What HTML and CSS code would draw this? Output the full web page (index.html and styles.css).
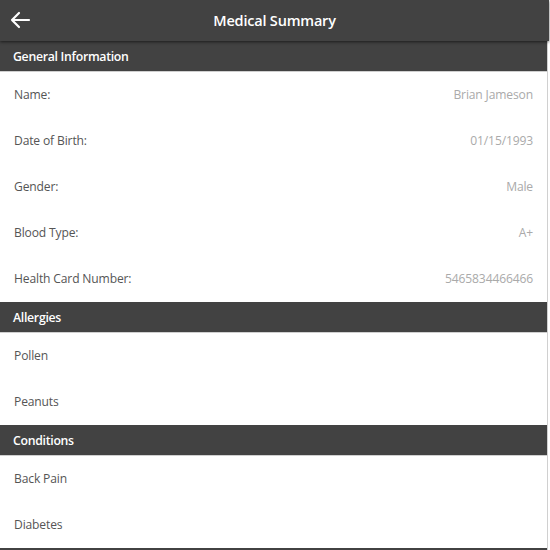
FILE: index.html
```html
<!DOCTYPE html>
<html>
<head>
<meta charset="utf-8">
<link rel="stylesheet" href="styles.css">
</head>
<body>
<div class="topbar">
  <svg class="back" width="22" height="18" viewBox="0 0 22 18"><path d="M20 9H3M10 2L3 9l7 7" fill="none" stroke="#fff" stroke-width="2.2" stroke-linecap="round" stroke-linejoin="round"/></svg>
  <div class="title">Medical Summary</div>
</div>
<div class="content">
  <div class="section">General Information</div>
  <div class="row"><span>Name:</span><span class="val">Brian Jameson</span></div>
  <div class="row"><span>Date of Birth:</span><span class="val">01/15/1993</span></div>
  <div class="row"><span>Gender:</span><span class="val">Male</span></div>
  <div class="row"><span>Blood Type:</span><span class="val">A+</span></div>
  <div class="row"><span>Health Card Number:</span><span class="val">5465834466466</span></div>
  <div class="section">Allergies</div>
  <div class="row"><span>Pollen</span></div>
  <div class="row"><span>Peanuts</span></div>
  <div class="section">Conditions</div>
  <div class="row"><span>Back Pain</span></div>
  <div class="row"><span>Diabetes</span></div>
  <div class="section"></div>
</div>
</body>
</html>
```
FILE: styles.css
```css
html, body { margin: 0; padding: 0; background: #fff; overflow: hidden; }
body { font-family: "Open Sans", "Noto Sans", sans-serif; width: 550px; height: 550px; }
.topbar {
  height: 41px; background: #424242; display: flex; align-items: center; justify-content: center;
  position: relative; box-shadow: 0 1px 3px rgba(0,0,0,0.6); z-index: 2; width: 549px;
}
.back { position: absolute; left: 9px; top: 11px; }
.title { color: #fff; font-weight: 600; font-size: 14.5px; letter-spacing: -0.2px; }
.content { width: 547px; border-right: 1px solid #d0d0d0; }
.section {
  box-sizing: border-box; background: #424242; color: #fff; font-weight: 600;
  font-size: 12.3px; letter-spacing: -0.3px; display: flex; align-items: center; padding-left: 13px;
  border-bottom: 1px solid #cfcfcf; height: 31px;
}
.row {
  height: 46px; box-sizing: border-box; display: flex; align-items: center; justify-content: space-between;
  padding: 0 14px 2px 14px; font-size: 12.1px; color: #555; letter-spacing: -0.15px;
}
.val { color: #aaa; }
```
